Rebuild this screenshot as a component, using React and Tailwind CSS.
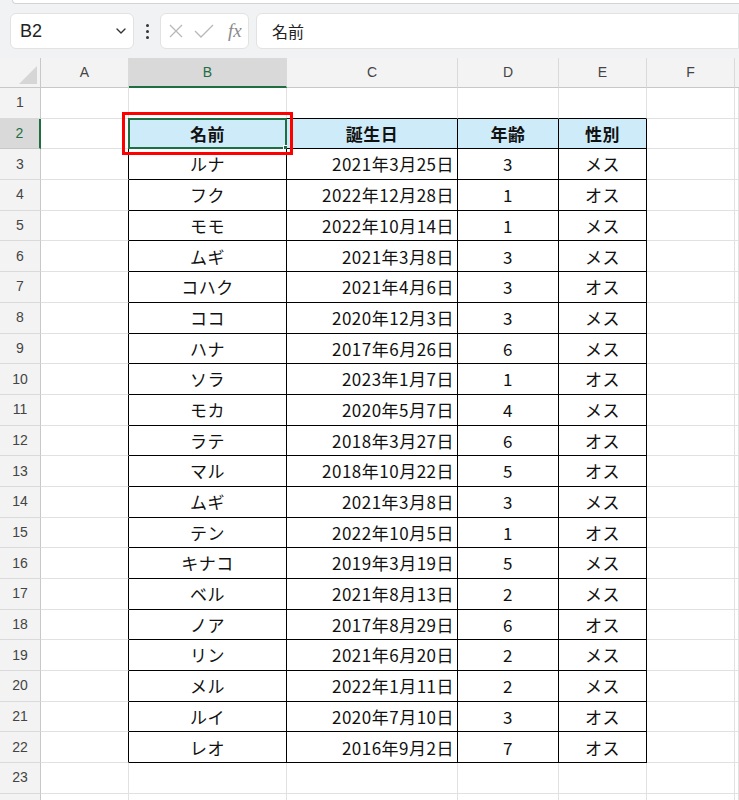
import React from 'react'
import { ChevronDown } from 'lucide-react'

const rows = [
    ['ルナ', '2021年3月25日', '3', 'メス'],
    ['フク', '2022年12月28日', '1', 'オス'],
    ['モモ', '2022年10月14日', '1', 'メス'],
    ['ムギ', '2021年3月8日', '3', 'メス'],
    ['コハク', '2021年4月6日', '3', 'オス'],
    ['ココ', '2020年12月3日', '3', 'メス'],
    ['ハナ', '2017年6月26日', '6', 'メス'],
    ['ソラ', '2023年1月7日', '1', 'オス'],
    ['モカ', '2020年5月7日', '4', 'メス'],
    ['ラテ', '2018年3月27日', '6', 'オス'],
    ['マル', '2018年10月22日', '5', 'オス'],
    ['ムギ', '2021年3月8日', '3', 'メス'],
    ['テン', '2022年10月5日', '1', 'オス'],
    ['キナコ', '2019年3月19日', '5', 'メス'],
    ['ベル', '2021年8月13日', '2', 'メス'],
    ['ノア', '2017年8月29日', '6', 'オス'],
    ['リン', '2021年6月20日', '2', 'メス'],
    ['メル', '2022年1月11日', '2', 'メス'],
    ['ルイ', '2020年7月10日', '3', 'オス'],
    ['レオ', '2016年9月2日', '7', 'オス'],
]

const cellFont = { fontFamily: '"Noto Sans CJK JP", "Noto Sans", sans-serif' }

// grey gridline cell
function Cell({ w, className = '', children }) {
    return (
        <div className={`${w} shrink-0 h-full border-r border-b border-[#e1e1e1] flex items-center ${className}`}>
            {children}
        </div>
    )
}

function RowHeader({ n, selected }) {
    return (
        <div
            className={`w-[41px] shrink-0 h-full flex items-center justify-center text-[14px] border-b ${
                selected
                    ? 'bg-[#d9d9d9] text-[#1e6e42] border-r-2 border-r-[#1e6e42] border-b-[#c8c8c8]'
                    : 'bg-[#f3f3f3] text-[#444] border-r border-r-[#c8c8c8] border-b-[#dadada]'
            }`}
            style={{ fontFamily: '"Liberation Sans", Arial, sans-serif' }}
        >
            {n}
        </div>
    )
}

function TableCell({ w, align = 'center', bold, head, children, extra }) {
    return (
        <div
            className={`${w} shrink-0 h-full relative border-r border-b border-black flex items-center px-[3px] text-[17px] tracking-[0.5px] text-[#111] ${
                align === 'right' ? 'justify-end' : 'justify-center'
            } ${bold ? 'font-bold' : ''} ${head ? 'bg-[#cdebf8]' : 'bg-white'}`}
            style={cellFont}
        >
            {children}
            {extra}
        </div>
    )
}

export default function App() {
    return (
        <div className="relative w-[739px] h-[800px] overflow-hidden bg-white">
            {/* toolbar */}
            <div className="h-[58px] bg-[#f1f2f3] relative">
                <div className="ml-[12px] h-[4px] bg-white border-b border-l border-[#d4d4d4] rounded-bl-[6px]"></div>
                <div className="flex items-center h-[36px] mt-[9px] pl-[10px] gap-[7px]">
                    <div className="w-[124px] h-[36px] bg-white border border-[#e2e2e2] rounded-[6px] flex items-center pl-[9px] pr-[4px]">
                        <span className="flex-1 text-[18px] text-[#222]" style={{ fontFamily: '"Liberation Sans", Arial, sans-serif' }}>B2</span>
                        <ChevronDown size={16} strokeWidth={2} className="text-[#333]" />
                    </div>
                    <div className="w-[12px] flex flex-col items-center gap-[3px]">
                        <div className="w-[3px] h-[3px] rounded-full bg-[#333]"></div>
                        <div className="w-[3px] h-[3px] rounded-full bg-[#333]"></div>
                        <div className="w-[3px] h-[3px] rounded-full bg-[#333]"></div>
                    </div>
                    <div className="w-[89px] h-[36px] bg-white border border-[#e2e2e2] rounded-[6px] flex items-center pl-[7px] gap-[10px]">
                        <svg width="16" height="16" viewBox="0 0 16 16" fill="none" stroke="#b8b8b8" strokeWidth="1.3">
                            <path d="M2 2 L14 14 M14 2 L2 14" />
                        </svg>
                        <svg width="20" height="16" viewBox="0 0 20 16" fill="none" stroke="#b8b8b8" strokeWidth="1.3">
                            <path d="M1 8 L7 14 L19 2" />
                        </svg>
                        <span className="italic text-[19px] text-[#8a8a8a] ml-[4px]" style={{ fontFamily: '"Liberation Serif", "Times New Roman", serif' }}>fx</span>
                    </div>
                    <div className="flex-1 h-[36px] bg-white border border-[#e2e2e2] rounded-l-[6px] flex items-center pl-[15px] text-[16px] text-[#222]" style={cellFont}>
                        名前
                    </div>
                </div>
            </div>

            {/* column headers */}
            <div className="flex h-[30px] bg-[#f3f3f3] text-[14px] text-[#444]" style={{ fontFamily: '"Liberation Sans", Arial, sans-serif' }}>
                <div className="w-[41px] shrink-0 h-full border-r border-b border-[#c8c8c8] relative">
                    <div className="absolute right-[3px] bottom-[3px] w-0 h-0 border-l-[18px] border-l-transparent border-b-[18px] border-b-[#d6d6d6]"></div>
                </div>
                <div className="w-[88px] shrink-0 h-full border-r border-b border-r-[#dadada] border-b-[#c8c8c8] flex items-center justify-center">A</div>
                <div className="w-[158px] shrink-0 h-full border-r border-r-[#dadada] border-b-2 border-b-[#1e6e42] bg-[#d9d9d9] text-[#1e6e42] flex items-center justify-center">B</div>
                <div className="w-[171px] shrink-0 h-full border-r border-b border-r-[#dadada] border-b-[#c8c8c8] flex items-center justify-center">C</div>
                <div className="w-[101px] shrink-0 h-full border-r border-b border-r-[#dadada] border-b-[#c8c8c8] flex items-center justify-center">D</div>
                <div className="w-[88px] shrink-0 h-full border-r border-b border-r-[#dadada] border-b-[#c8c8c8] flex items-center justify-center">E</div>
                <div className="w-[88px] shrink-0 h-full border-r border-b border-r-[#dadada] border-b-[#c8c8c8] flex items-center justify-center">F</div>
                <div className="flex-1 h-full border-b border-[#c8c8c8]"></div>
            </div>

            {/* row 1 */}
            <div className="flex h-[30.7px]">
                <RowHeader n={1} />
                <Cell w="w-[88px]" />
                <Cell w="w-[158px]" className="border-b-black" />
                <Cell w="w-[171px]" className="border-b-black" />
                <Cell w="w-[101px]" className="border-b-black" />
                <Cell w="w-[88px]" className="border-b-black" />
                <Cell w="w-[88px]" />
                <Cell w="flex-1" />
            </div>

            {/* row 2: table header */}
            <div className="flex h-[30.7px]">
                <RowHeader n={2} selected />
                <Cell w="w-[88px]" className="border-r-black" />
                <TableCell
                    w="w-[158px]"
                    bold
                    head
                    extra={
                        <>
                            <div className="absolute -left-px -top-px right-[-1px] bottom-[-1px] border-2 border-[#1e6e42]"></div>
                            <div className="absolute right-[-4px] bottom-[-4px] w-[7px] h-[7px] bg-[#1e6e42] border border-white"></div>
                        </>
                    }
                >
                    名前
                </TableCell>
                <TableCell w="w-[171px]" bold head>誕生日</TableCell>
                <TableCell w="w-[101px]" bold head>年齢</TableCell>
                <TableCell w="w-[88px]" bold head>性別</TableCell>
                <Cell w="w-[88px]" />
                <Cell w="flex-1" />
            </div>

            {rows.map((r, i) => (
                <div key={i} className="flex h-[30.7px]">
                    <RowHeader n={i + 3} />
                    <Cell w="w-[88px]" className="border-r-black" />
                    <TableCell w="w-[158px]">{r[0]}</TableCell>
                    <TableCell w="w-[171px]" align="right">{r[1]}</TableCell>
                    <TableCell w="w-[101px]">{r[2]}</TableCell>
                    <TableCell w="w-[88px]">{r[3]}</TableCell>
                    <Cell w="w-[88px]" />
                    <Cell w="flex-1" />
                </div>
            ))}

            {[23, null].map((n, i) => (
                <div key={i} className="flex h-[30.7px]">
                    <RowHeader n={n} />
                    <Cell w="w-[88px]" />
                    <Cell w="w-[158px]" />
                    <Cell w="w-[171px]" />
                    <Cell w="w-[101px]" />
                    <Cell w="w-[88px]" />
                    <Cell w="w-[88px]" />
                    <Cell w="flex-1" />
                </div>
            ))}

            {/* red highlight box drawn over B2 */}
            <div className="absolute left-[122px] top-[112px] w-[171px] h-[43px] border-[3px] border-[#ff0000] pointer-events-none"></div>
        </div>
    )
}
